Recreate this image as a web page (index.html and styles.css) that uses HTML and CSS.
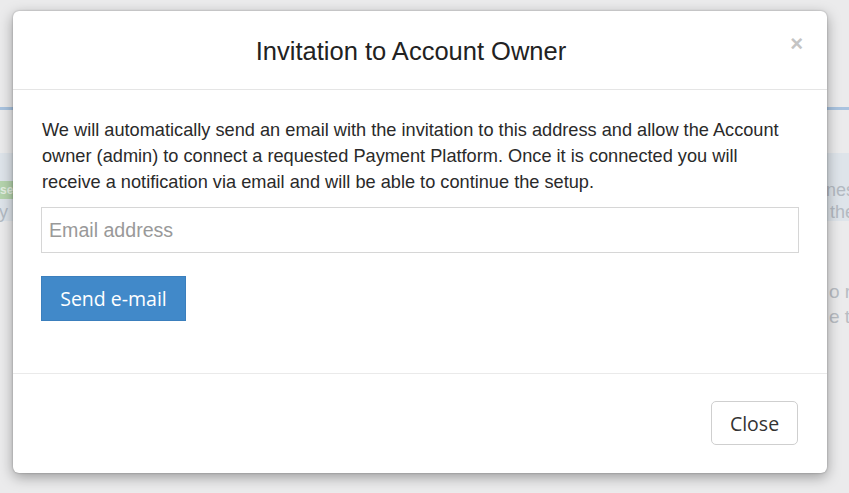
FILE: index.html
```html
<!DOCTYPE html>
<html>
<head>
<meta charset="utf-8">
<link rel="stylesheet" href="styles.css">
</head>
<body>
<div class="page">
  <div class="page-rule"></div>
  <div class="page-panel">
    <div class="page-panel-row">
      <span class="page-badge">se</span>
      <span class="pr">nes</span>
    </div>
    <div class="page-panel-row">
      <span class="pl">y</span>
      <span class="pr">the</span>
    </div>
  </div>
  <div class="page-notes">
    <span>o r</span>
    <span>e t</span>
  </div>
</div>
<div class="modal">
  <div class="modal-header">
    <h4 class="modal-title">Invitation to Account Owner</h4>
    <button class="modal-close" type="button">×</button>
  </div>
  <div class="modal-body">
    <p class="intro">We will automatically send an email with the invitation to this address and allow the Account owner (admin) to connect a requested Payment Platform. Once it is connected you will receive a notification via email and will be able to continue the setup.</p>
    <input class="email" type="text" placeholder="Email address">
    <button class="btn btn-primary" type="button">Send e-mail</button>
  </div>
  <div class="modal-footer">
    <button class="btn btn-default" type="button">Close</button>
  </div>
</div>
</body>
</html>
```
FILE: styles.css
```css
* { box-sizing: border-box; }
html, body { margin: 0; padding: 0; }
body {
  width: 849px;
  height: 493px;
  overflow: hidden;
  background: #ebebec;
  font-family: "Liberation Sans", Arial, sans-serif;
  color: #333;
  position: relative;
}
.page {
  padding-top: 107px;
  display: flex;
  flex-direction: column;
}
.page-rule {
  height: 3px;
  background: #a9c3df;
}
.page-panel {
  margin-top: 43px;
  height: 68px;
  background: #dee4ea;
  padding-top: 26px;
  color: #b3bac2;
  font-size: 18px;
}
.page-panel-row {
  display: flex;
  justify-content: space-between;
  align-items: center;
  height: 22px;
}
.page-badge {
  background: #b5d4ad;
  color: #e6efe3;
  font-size: 12px;
  font-weight: bold;
  padding: 2px 0;
  width: 13px;
  overflow: hidden;
  line-height: 14px;
}
.pl { margin-left: -1px; width: 13px; overflow: hidden; }
.pr { margin-right: -6px; }
.page-notes {
  margin-top: 58px;
  margin-left: 829px;
  display: flex;
  flex-direction: column;
  white-space: nowrap;
  color: #b8bdc3;
  font-size: 19px;
  line-height: 25px;
}
.modal {
  position: absolute;
  left: 13px;
  top: 11px;
  width: 814px;
  height: 462px;
  background: #fff;
  border-radius: 6px;
  box-shadow: 0 4px 14px rgba(0,0,0,0.35), 0 0 2px rgba(0,0,0,0.3);
  display: flex;
  flex-direction: column;
}
.modal-header {
  height: 79px;
  border-bottom: 1px solid #e5e5e5;
  display: flex;
  align-items: center;
  justify-content: center;
  padding-right: 18px;
  position: relative;
}
.modal-title {
  margin: 0;
  font-weight: normal;
  font-size: 25.5px;
  color: #222;
  padding-top: 2px;
}
.modal-close {
  position: absolute;
  right: 24px;
  top: 20px;
  border: 0;
  background: none;
  font-family: "Liberation Sans", Arial, sans-serif;
  font-size: 22px;
  font-weight: bold;
  color: #c4c4c4;
  padding: 0;
  cursor: pointer;
}
.modal-body {
  padding: 27px 28px 0 28px;
  flex: 1;
  display: flex;
  flex-direction: column;
  align-items: flex-start;
  border-bottom: 1px solid #eaeaea;
}
.intro {
  margin: 0 0 0 1px;
  font-size: 18.2px;
  line-height: 26px;
  color: #2a2a2a;
}
.email {
  margin-top: 12px;
  width: 758px;
  height: 46px;
  border: 1px solid #d6d6d6;
  padding: 0 7px;
  font-family: "Liberation Sans", Arial, sans-serif;
  font-size: 19.6px;
  color: #333;
  outline: none;
}
.email::placeholder { color: #999; }
.btn {
  font-family: "Open Sans", sans-serif;
  font-size: 19.5px;
  cursor: pointer;
}
.btn-primary {
  margin-top: 23px;
  width: 145px;
  height: 45px;
  background: #4189c9;
  color: #fff;
  border: 1px solid #3b7fbd;
  border-radius: 0;
  padding: 0;
}
.modal-footer {
  height: 99px;
  display: flex;
  justify-content: flex-end;
  align-items: flex-start;
  padding: 27px 29px 0 0;
}
.btn-default {
  width: 87px;
  height: 44px;
  background: #fff;
  border: 1px solid #cfcfcf;
  border-radius: 5px;
  color: #333;
  padding: 0;
}
```
